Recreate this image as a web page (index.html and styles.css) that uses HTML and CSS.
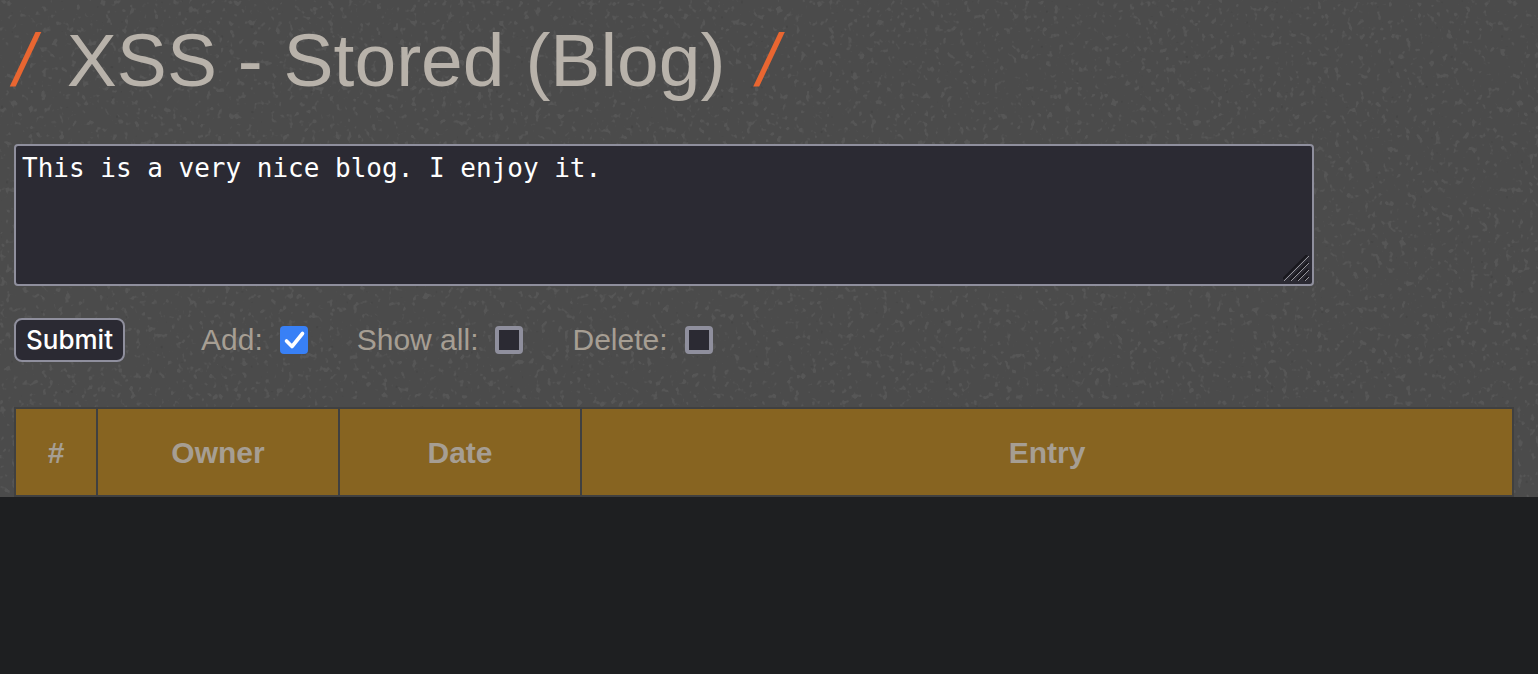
FILE: index.html
```html
<!DOCTYPE html>
<html lang="en">
<head>
<meta charset="utf-8">
<title>XSS - Stored (Blog)</title>
<link rel="stylesheet" href="styles.css">
</head>
<body>
<main class="page">
  <svg class="texture" aria-hidden="true">
    <filter id="specks" x="0" y="0" width="100%" height="100%" color-interpolation-filters="sRGB">
      <feTurbulence type="fractalNoise" baseFrequency="0.17 0.15" numOctaves="2" seed="8"/>
      <feColorMatrix values="0 0 0 0 0.37  0 0 0 0 0.37  0 0 0 0 0.37  8 0 0 0 -4.9"/>
    </filter>
    <filter id="grain" x="0" y="0" width="100%" height="100%" color-interpolation-filters="sRGB">
      <feTurbulence type="fractalNoise" baseFrequency="0.2" numOctaves="1" seed="21"/>
      <feColorMatrix values="0 0 0 0 0.22  0 0 0 0 0.22  0 0 0 0 0.22  7 0 0 0 -5.2"/>
    </filter>
    <rect width="100%" height="100%" filter="url(#specks)" opacity="0.6"/>
    <rect width="100%" height="100%" filter="url(#grain)" opacity="0.5"/>
  </svg>
  <h1 class="title"><span class="slash">/</span><span>XSS - Stored (Blog)</span><span class="slash">/</span></h1>
  <form class="form">
    <div class="entry-row">
      <div class="entry-box">
        <textarea class="entry" aria-label="Blog entry" spellcheck="false">This is a very nice blog. I enjoy it.</textarea>
        <svg class="grip" viewBox="0 0 26 26" aria-hidden="true">
          <path class="grip-shade" d="M0 24L24 0M7 25L25 7M14 25L25 14M21 25L25 21"/>
          <path class="grip-line" d="M1 26L26 1M8 26L26 8M15 26L26 15M22 26L26 22"/>
        </svg>
      </div>
    </div>
    <div class="controls">
      <button class="submit" type="button">Submit</button>
      <div class="options">
        <label class="option">Add: <input class="check" type="checkbox" checked></label>
        <label class="option">Show all: <input class="check" type="checkbox"></label>
        <label class="option">Delete: <input class="check" type="checkbox"></label>
      </div>
    </div>
  </form>
  <table class="entries">
    <thead>
      <tr><th class="col-num">#</th><th class="col-mid">Owner</th><th class="col-mid">Date</th><th>Entry</th></tr>
    </thead>
  </table>
</main>
</body>
</html>
```

FILE: styles.css
```css
* {
  box-sizing: border-box;
}

body {
  margin: 0;
  background: #1e1f21;
  color: #a69e93;
  font-family: "Liberation Sans", Arial, sans-serif;
  font-size: 30px;
}

.page {
  position: relative;
  isolation: isolate;
  padding: 16px 24px 0 14px;
  background: #4b4b4b;
}

.texture {
  position: absolute;
  inset: 0;
  z-index: -1;
  width: 100%;
  height: 100%;
}

.title {
  display: flex;
  gap: 32px;
  margin: 0;
  font-size: 75px;
  font-weight: 400;
  line-height: 88px;
  color: #b8b2aa;
}

.slash {
  font-style: italic;
  color: #e96631;
}

.form {
  margin-top: 40px;
}

.entry-row {
  display: grid;
  grid-template-columns: 13fr 2fr;
}

.entry-box {
  position: relative;
  display: flex;
}

.entry {
  width: 100%;
  height: 142px;
  padding: 7px 6px;
  border: 2px solid #8f8f9d;
  border-radius: 4px;
  background: #2b2a33;
  color: #fff;
  font: 26px/30px "DejaVu Sans Mono", monospace;
  resize: none;
}

.grip {
  position: absolute;
  right: 5px;
  bottom: 5px;
  width: 26px;
  height: 26px;
  fill: none;
}

.grip-shade {
  stroke: #19181e;
  stroke-width: 2;
}

.grip-line {
  stroke: #96959b;
  stroke-width: 1;
}

.controls {
  display: flex;
  align-items: center;
  gap: 76px;
  margin-top: 32px;
}

.submit {
  height: 44px;
  padding: 0 10px;
  border: 2px solid #8f8f9d;
  border-radius: 8px;
  background: #2b2a33;
  color: #fff;
  font: 500 26px/30px Inter, sans-serif;
}

.options {
  display: flex;
  gap: 49px;
}

.option {
  display: flex;
  align-items: center;
  gap: 17px;
}

.check {
  appearance: none;
  width: 28px;
  height: 28px;
  margin: 0;
  border: 4px solid #8f8f9d;
  border-radius: 4px;
  background: #2b2a33;
}

.check:checked {
  border: 0;
  background: #3880f6 url("data:image/svg+xml,%3Csvg xmlns='http://www.w3.org/2000/svg' viewBox='0 0 28 28'%3E%3Cpath d='M6.5 15L12 20.5L22.5 7.5' fill='none' stroke='white' stroke-width='3.6' stroke-linecap='round' stroke-linejoin='round'/%3E%3C/svg%3E");
}

.entries {
  width: 100%;
  margin-top: 45px;
  border-collapse: collapse;
  table-layout: fixed;
}

.entries th {
  height: 88px;
  padding: 2px 0 0;
  border: 2px solid #404040;
  background: #876421;
}

.col-num {
  width: 82px;
}

.col-mid {
  width: 242px;
}
```
